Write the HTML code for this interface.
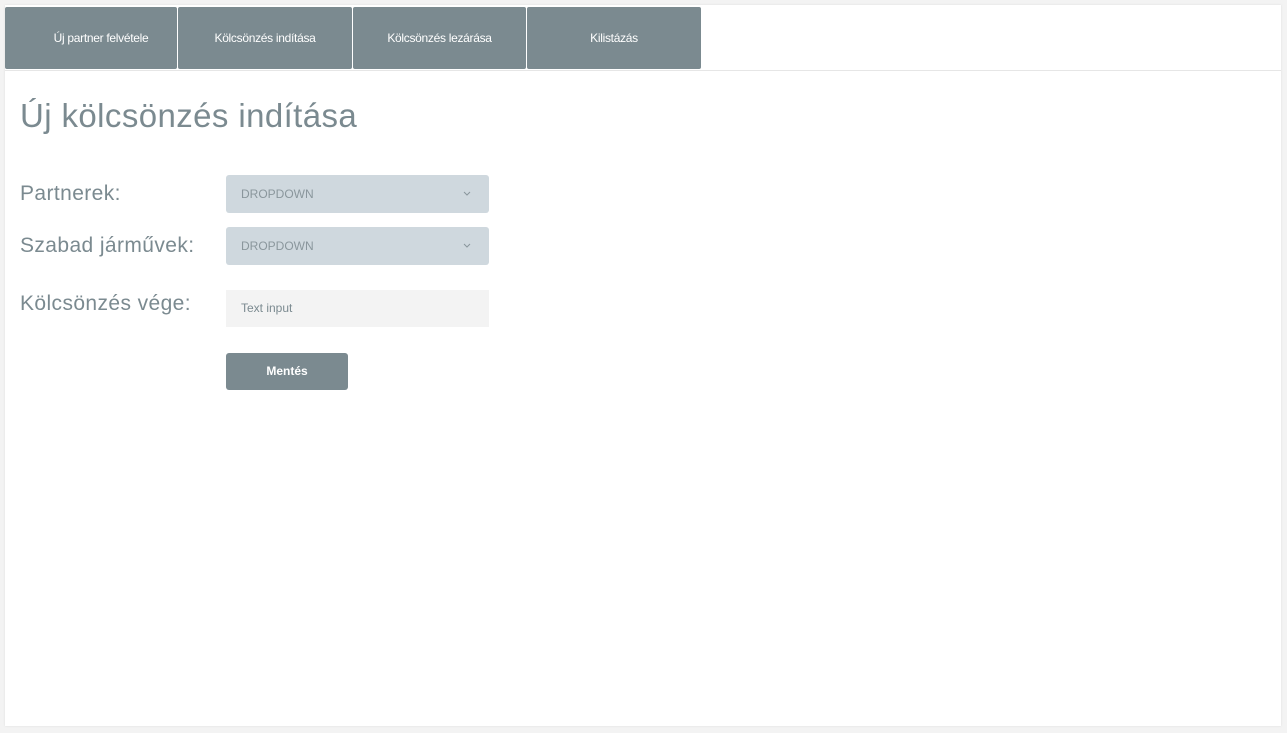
<!DOCTYPE html>
<html><head><style>
body{margin:0;background:#f3f3f3;width:1287px;height:733px;overflow:hidden;font-family:"Liberation Sans",sans-serif;}
.panel{position:absolute;left:5px;top:5px;width:1276px;height:721px;background:#fff;box-shadow:0 0 2px #ddd;}
.tab{position:absolute;top:7px;height:62px;background:#7b8a90;color:#fff;font-size:12px;line-height:62px;text-align:center;border-radius:2px;letter-spacing:-0.3px;}
.line{position:absolute;left:5px;top:70px;width:1276px;height:1px;background:#e6e6e6;}
h1{position:absolute;left:20px;top:97px;margin:0;font-weight:normal;font-size:33px;color:#7b8a90;letter-spacing:0.4px;}
.lbl{position:absolute;left:20px;font-size:21px;color:#7b8a90;letter-spacing:0.4px;}
.dd{position:absolute;left:226px;width:263px;height:38px;background:#cfd8de;border-radius:3px;font-size:12px;color:#8a969c;line-height:38px;text-indent:15px;}
.dd svg{position:absolute;right:18px;top:16px;}
.ti{position:absolute;left:226px;top:290px;width:263px;height:37px;background:#f3f3f3;font-size:12px;color:#7b8a90;line-height:37px;text-indent:15px;}
.btn{position:absolute;left:226px;top:353px;width:122px;height:37px;background:#7b8a90;border-radius:3px;color:#fff;font-size:12px;font-weight:bold;text-align:center;line-height:37px;}
</style></head><body>
<div class="panel"></div>
<div class="tab" style="left:5px;width:172px;padding-left:20px;box-sizing:border-box">Új partner felvétele</div>
<div class="tab" style="left:178px;width:174px">Kölcsönzés indítása</div>
<div class="tab" style="left:353px;width:173px">Kölcsönzés lezárása</div>
<div class="tab" style="left:527px;width:174px">Kilistázás</div>
<div class="line"></div>
<h1>Új kölcsönzés indítása</h1>
<div class="lbl" style="top:182px">Partnerek:</div>
<div class="lbl" style="top:234px">Szabad járművek:</div>
<div class="lbl" style="top:292px">Kölcsönzés vége:</div>
<div class="dd" style="top:175px">DROPDOWN<svg width="8" height="5"><path d="M1 1l3 3 3-3" stroke="#8a969c" fill="none"/></svg></div>
<div class="dd" style="top:227px">DROPDOWN<svg width="8" height="5"><path d="M1 1l3 3 3-3" stroke="#8a969c" fill="none"/></svg></div>
<div class="ti">Text input</div>
<div class="btn">Mentés</div>
</body></html>
